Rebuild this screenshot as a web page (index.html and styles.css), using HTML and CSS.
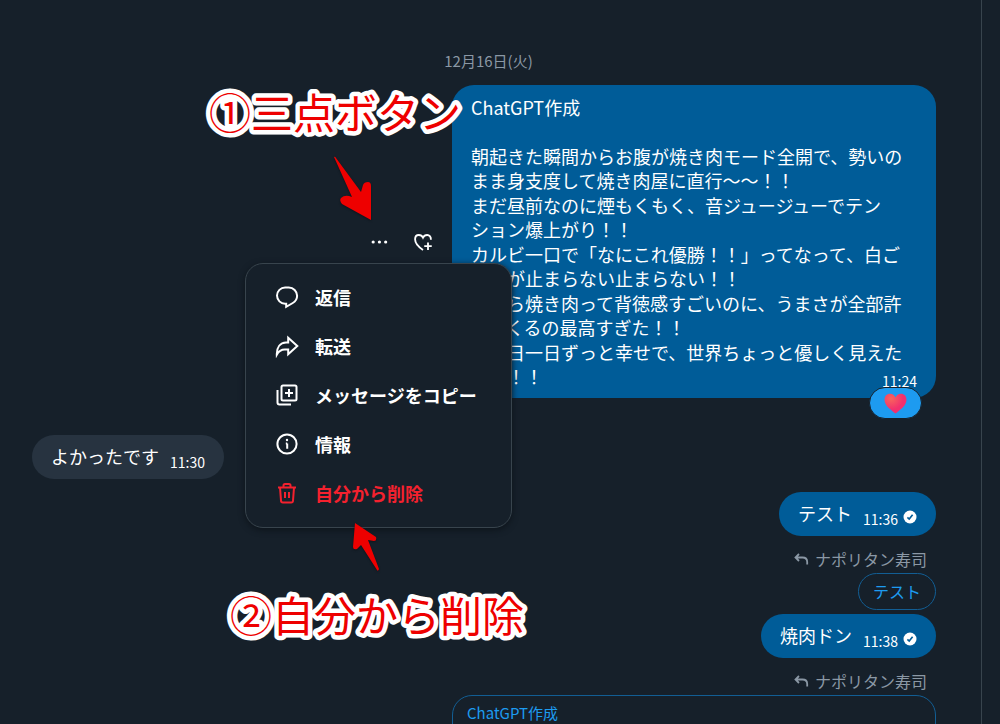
FILE: index.html
```
<!DOCTYPE html>
<html lang="ja">
<head>
<meta charset="utf-8">
<meta name="viewport" content="width=device-width, initial-scale=1">
<title>メッセージ</title>
<link rel="stylesheet" href="styles.css">
</head>
<body>
<main class="chat">
  <p class="date">12月16日(火)</p>

  <section class="row sent">
    <div class="actions">
      <button class="icon-button" type="button" aria-label="その他">
        <svg class="icon-small" viewBox="0 0 24 24" fill="currentColor"><circle cx="5" cy="12" r="1.900"/><circle cx="12.500" cy="12" r="1.900"/><circle cx="20" cy="12" r="1.900"/></svg>
      </button>
      <button class="icon-button" type="button" aria-label="リアクション">
        <svg class="icon-small" viewBox="0 0 24 24" fill="none" stroke="currentColor" stroke-width="2.2"><path d="M12 21.500C6 17.500 2.500 13.500 2.500 8.700C2.500 5.500 4.600 3.600 7 3.600C9.200 3.600 11 4.800 12 6.800C13 4.800 14.800 3.600 17 3.600C19.500 3.600 21.600 5.500 21.500 9.300"/><path d="M18 12.500v9M13.500 17h9"/></svg>
      </button>
      <div class="menu" role="menu">
        <button class="menu-item" type="button" role="menuitem">
          <svg class="icon" viewBox="0 0 24 24" fill="none" stroke="currentColor" stroke-width="2"><path d="M10.200 2.500h3.600a8.300 8.300 0 0 1 8.300 8.300c0 3.500-1.800 5.800-4.300 7.200L11.200 21.800v-3.100h-1a8.100 8.100 0 0 1-8.200-8.100a8.100 8.100 0 0 1 8.200-8.100z"/></svg>
          <span>返信</span>
        </button>
        <button class="menu-item" type="button" role="menuitem">
          <svg class="icon" viewBox="0 0 24 24" fill="none" stroke="currentColor" stroke-width="2"><path d="M13.200 3.700L22.300 12l-9.100 8.300v-4.700H9.800c-3.700 0-6 1.500-8 5.100c-.200-7.500 3.500-12 9.200-12.200h2.200z"/></svg>
          <span>転送</span>
        </button>
        <button class="menu-item" type="button" role="menuitem">
          <svg class="icon" viewBox="0 0 24 24" fill="none" stroke="currentColor" stroke-width="2"><rect x="6.500" y="2.500" width="15" height="15" rx="1.500"/><path d="M14 6v8M10 10h8M2.500 7v12.500q0 2 2 2h11.500"/></svg>
          <span>メッセージをコピー</span>
        </button>
        <button class="menu-item" type="button" role="menuitem">
          <svg class="icon" viewBox="0 0 24 24" fill="none" stroke="currentColor" stroke-width="2"><circle cx="12" cy="12" r="9.600"/><path d="M12.200 16.800v-5.300M10.800 11.500h1.400"/><circle cx="12" cy="8" r="1.200" fill="currentColor" stroke="none"/></svg>
          <span>情報</span>
        </button>
        <button class="menu-item danger" type="button" role="menuitem">
          <svg class="icon" viewBox="0 0 24 24" fill="none" stroke="currentColor" stroke-width="2"><path d="M3 6.500h18M5 6.500l1 13.200q.100 1.800 1.800 1.800h8.400q1.700 0 1.800-1.800l1-13.200M8.500 6.500v-2q0-1.500 1.500-1.500h4q1.500 0 1.500 1.500v2M10 11v6M14 11v6"/></svg>
          <span>自分から削除</span>
        </button>
      </div>
    </div>
    <article class="bubble long">
      <p class="heading">ChatGPT作成</p>
      <p>朝起きた瞬間からお腹が焼き肉モード全開で、勢いの<br>まま身支度して焼き肉屋に直行～～！！</p>
      <p>まだ昼前なのに煙もくもく、音ジュージューでテン<br>ション爆上がり！！</p>
      <p>カルビ一口で「なにこれ優勝！！」ってなって、白ご<br>はんが止まらない止まらない！！</p>
      <p>昼から焼き肉って背徳感すごいのに、うまさが全部許<br>してくるの最高すぎた！！</p>
      <p>　今日一日ずっと幸せで、世界ちょっと優しく見えた<br>よね！！</p>
      <time class="corner-time">11:24</time>
      <button class="reaction" type="button" aria-label="ハート">
        <svg class="heart" viewBox="0 0 24 22"><defs><radialGradient id="glow" cx=".3" cy=".25" r=".55"><stop offset="0" stop-color="#f8655c"/><stop offset="1" stop-color="#f2306e"/></radialGradient></defs><path fill="url(#glow)" d="M12 21.500C7 17.500 .500 13 .500 7C.500 3 3 .700 6.300 .700C9 .700 11 2.200 12 4.600C13 2.200 15 .700 17.700 .700C21 .700 23.500 3 23.500 7C23.500 13 17 17.500 12 21.500z"/></svg>
      </button>
    </article>
  </section>

  <section class="row received">
    <article class="bubble short gray"><p>よかったです</p><time>11:30</time></article>
  </section>

  <section class="row sent">
    <article class="bubble short"><p>テスト</p><time>11:36</time>
      <svg class="check" viewBox="0 0 14 14"><circle cx="7" cy="7" r="6.500" fill="#fff"/><path d="M4.400 7.400l1.800 1.700L9.600 4.800" fill="none" stroke="#005c98" stroke-width="1.600"/></svg>
    </article>
  </section>

  <section class="thread">
    <p class="reply-to"><svg class="reply-icon" viewBox="0 0 16 14" fill="none" stroke="currentColor" stroke-width="1.800"><path d="M6 2L2.500 5.500L6 9M2.500 5.500h7q4.700 0 4.700 4.500v2.500"/></svg>ナポリタン寿司</p>
    <div class="quote">テスト</div>
    <article class="bubble short"><p>焼肉ドン</p><time>11:38</time>
      <svg class="check" viewBox="0 0 14 14"><circle cx="7" cy="7" r="6.500" fill="#fff"/><path d="M4.400 7.400l1.800 1.700L9.600 4.800" fill="none" stroke="#005c98" stroke-width="1.600"/></svg>
    </article>
  </section>

  <section class="thread">
    <p class="reply-to"><svg class="reply-icon" viewBox="0 0 16 14" fill="none" stroke="currentColor" stroke-width="1.800"><path d="M6 2L2.500 5.500L6 9M2.500 5.500h7q4.700 0 4.700 4.500v2.500"/></svg>ナポリタン寿司</p>
    <div class="quote wide">ChatGPT作成</div>
  </section>

  <svg class="note note-one" width="290" height="80"><text x="18" y="54">①三点ボタン</text></svg>
  <svg class="note note-two" width="332" height="80"><text x="18" y="54">②自分から削除</text></svg>
  <svg class="arrow arrow-one" viewBox="0 0 42 68"><path d="M3 3Q4 2 5 4L30 38L32 31Q33 28 37 28Q40 28 40 32L40 66L11 50Q8 46 10 44Q14 40 21 43z" fill="#ee0000"/></svg>
  <svg class="arrow arrow-two" viewBox="0 0 32 54"><path d="M5 3L26 17Q27 21 24 21L18 20L29 49Q28 52 27 50L11 25L7 29Q3 30 3 27z" fill="#ee0000"/></svg>
</main>
</body>
</html>
```
FILE: styles.css
```
* { box-sizing: border-box; }

body {
  margin: 0;
  background: #16202a;
  color: #fff;
  font-family: "Noto Sans CJK JP", sans-serif;
  font-size: 18px;
  line-height: 24px;
}

p { margin: 0; }

button {
  margin: 0;
  padding: 0;
  border: 0;
  background: none;
  color: inherit;
  font: inherit;
  cursor: pointer;
}

svg { display: block; flex: none; }

.chat {
  position: relative;
  height: 100vh;
  margin-right: 18px;
  padding: 49px 45px 0 32px;
  border-right: 1px solid #38444d;
  overflow: hidden;
}

.date {
  margin-bottom: 12px;
  padding-left: 9px;
  color: #8b98a5;
  font-size: 15px;
  text-align: center;
}

.row { display: flex; align-items: center; }
.sent { justify-content: flex-end; }
.received { margin: 37px 0 13px; }

.actions {
  position: relative;
  display: flex;
  gap: 20px;
  margin-right: 17px;
}

.icon-button { padding: 2px; }
.icon-small { width: 20px; height: 20px; }

.menu {
  position: absolute;
  z-index: 2;
  top: 33px;
  right: -77px;
  width: 267px;
  padding: 9px 0;
  border: 1px solid #38444d;
  border-radius: 18px;
  background: #16202a;
  box-shadow: 0 2px 6px #0d141b;
}

.menu-item {
  display: flex;
  align-items: center;
  gap: 16px;
  width: 100%;
  height: 49px;
  padding-left: 29px;
  font-weight: 700;
  white-space: nowrap;
}

.icon { width: 24px; height: 24px; }
.danger { color: #f4212e; }

.bubble {
  border-radius: 22px;
  background: #005c98;
}

.long {
  position: relative;
  display: flex;
  flex-direction: column;
  gap: 1px;
  width: 484px;
  padding: 10px 19px;
}

.heading { margin-bottom: 24px; }

.corner-time {
  position: absolute;
  right: 19px;
  bottom: 5px;
}

time { font-size: 14px; }

.reaction {
  position: absolute;
  right: 14px;
  bottom: -21px;
  display: grid;
  place-items: center;
  width: 53px;
  height: 32px;
  border: 1px solid #16202a;
  border-radius: 16px;
  background: #1d9bf0;
}

.heart { width: 23px; height: 21px; }

.short {
  display: flex;
  align-items: center;
  padding: 9px 19px 11px;
}

.short time { margin: 6px 0 -6px 11px; }
.gray { background: #273340; }

.check {
  width: 14px;
  height: 14px;
  margin: 8px 0 0 5px;
}

.thread {
  display: flex;
  flex-direction: column;
  align-items: flex-end;
  padding-top: 11px;
}

.reply-to {
  display: flex;
  align-items: center;
  gap: 6px;
  padding-right: 9px;
  color: #8b98a5;
  font-size: 16px;
}

.reply-icon { width: 16px; height: 14px; }

.quote {
  margin: 2px 0 4px;
  padding: 5px 14px 6px;
  border: 1px solid #125e94;
  border-radius: 20px;
  color: #1d9bf0;
  font-size: 16px;
}

.wide {
  width: 484px;
  height: 120px;
  font-size: 15px;
}

.note {
  position: absolute;
  z-index: 3;
  font-size: 42px;
  font-weight: 400;
  line-height: 56px;
}

.note text {
  fill: #ee0000;
  stroke: #fff;
  stroke-width: 9px;
  stroke-linejoin: round;
  paint-order: stroke fill;
}

.note-one { left: 191px; top: 75px; }
.note-two { left: 212px; top: 578px; }

.arrow { position: absolute; z-index: 3; filter: drop-shadow(0 1px 1px #0d141b); }
.arrow-one { left: 331px; top: 154px; width: 42px; height: 68px; }
.arrow-two { left: 350px; top: 520px; width: 32px; height: 54px; }
```
